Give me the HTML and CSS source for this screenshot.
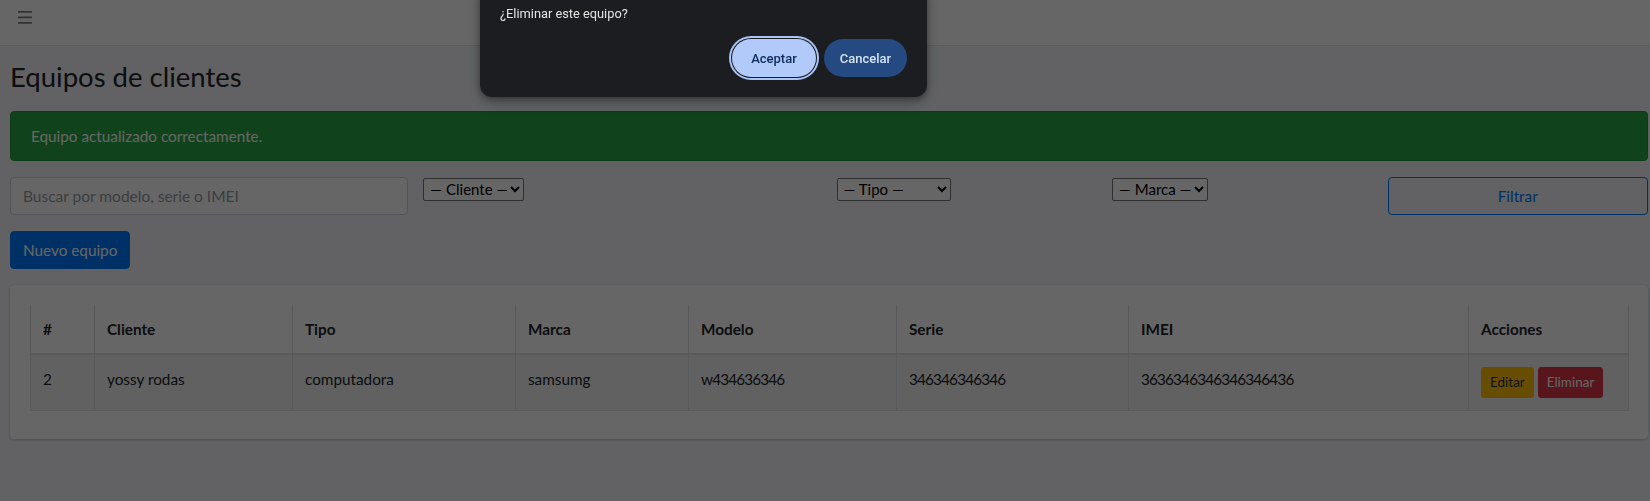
FILE: index.html
```html
<!DOCTYPE html>
<html lang="es">
<head>
<meta charset="utf-8">
<title>Equipos de clientes</title>
<link rel="stylesheet" href="styles.css">
</head>
<body>
<header class="topbar">
  <a class="menu-toggle" href="#" aria-label="Menú">
    <svg width="14" height="13" viewBox="0 0 14 13" aria-hidden="true">
      <rect x="0" y="0" width="14" height="1.7" rx="0.5"/>
      <rect x="0" y="5.6" width="14" height="1.7" rx="0.5"/>
      <rect x="0" y="11.1" width="14" height="1.7" rx="0.5"/>
    </svg>
  </a>
</header>

<main class="content">
  <h1 class="page-title">Equipos de clientes</h1>

  <div class="alert alert-success">Equipo actualizado correctamente.</div>

  <form class="filters">
    <div class="col col-3"><input class="form-control" type="text" placeholder="Buscar por modelo, serie o IMEI"></div>
    <div class="col col-3"><select class="plain-select sel-cliente"><option>— Cliente —</option></select></div>
    <div class="col col-2"><select class="plain-select sel-tipo"><option>— Tipo —</option></select></div>
    <div class="col col-2"><select class="plain-select sel-marca"><option>— Marca —</option></select></div>
    <div class="col col-2"><button type="button" class="btn btn-outline-primary btn-block">Filtrar</button></div>
  </form>

  <div class="toolbar">
    <button type="button" class="btn btn-primary">Nuevo equipo</button>
  </div>

  <section class="card">
    <table class="table">
      <colgroup>
        <col class="c-num"><col class="c-cliente"><col class="c-tipo"><col class="c-marca">
        <col class="c-modelo"><col class="c-serie"><col class="c-imei"><col class="c-acciones">
      </colgroup>
      <thead>
        <tr>
          <th>#</th><th>Cliente</th><th>Tipo</th><th>Marca</th><th>Modelo</th><th>Serie</th><th>IMEI</th><th>Acciones</th>
        </tr>
      </thead>
      <tbody>
        <tr>
          <td>2</td>
          <td>yossy rodas</td>
          <td>computadora</td>
          <td>samsumg</td>
          <td class="cell-code">w434636346</td>
          <td class="cell-code">346346346346</td>
          <td class="cell-code">3636346346346346436</td>
          <td><button type="button" class="btn btn-sm btn-warning">Editar</button> <button type="button" class="btn btn-sm btn-danger">Eliminar</button></td>
        </tr>
      </tbody>
    </table>
  </section>
</main>

<div class="overlay"></div>

<div class="dialog" role="alertdialog">
  <p class="dialog-msg">¿Eliminar este equipo?</p>
  <div class="dialog-actions">
    <button type="button" class="dlg-btn dlg-ok">Aceptar</button>
    <button type="button" class="dlg-btn dlg-cancel">Cancelar</button>
  </div>
</div>
</body>
</html>
```

FILE: styles.css
```css
html, body {
  margin: 0;
  overflow: hidden;
}

body {
  background: #f4f6f9;
  font-family: Lato, "Noto Sans", sans-serif;
  font-size: 15.3px;
  line-height: 24px;
  color: #212529;
  height: 501px;
}

/* top navbar */
.topbar {
  box-sizing: border-box;
  height: 46px;
  background: #fff;
  border-bottom: 1px solid #dee2e6;
  padding: 11px 0 0 18px;
}
.menu-toggle {
  display: block;
  width: 14px;
  height: 13px;
  fill: rgba(0, 0, 0, 0.5);
}
.menu-toggle svg { display: block; }

/* content */
.content {
  padding: 0 2px 0 10px;
}

.page-title {
  margin: 15px 0 18px;
  font-size: 27.5px;
  font-weight: 400;
  line-height: 32px;
  color: #212529;
}

.alert {
  box-sizing: border-box;
  height: 50px;
  padding: 12px 20px;
  margin-bottom: 16px;
  border: 1px solid transparent;
  border-radius: 4px;
}
.alert-success {
  background: #28a745;
  border-color: #23923d;
  color: #fff;
}

/* filter row */
.filters {
  display: flex;
  margin: 0 -7.5px 16px;
}
.col {
  box-sizing: border-box;
  padding: 0 7.5px;
}
.col-3 { flex: 0 0 25%; }
.col-2 { flex: 0 0 16.6667%; }

.form-control {
  display: block;
  box-sizing: border-box;
  width: 100%;
  height: 38px;
  padding: 6px 12px;
  font: inherit;
  font-size: 15.5px;
  line-height: 24px;
  color: #495057;
  background: #fff;
  border: 1px solid #ced4da;
  border-radius: 4px;
}
.form-control::placeholder { color: #939ba2; }

.plain-select {
  box-sizing: border-box;
  height: 23px;
  font-family: inherit;
  font-size: 15px;
  line-height: normal;
  color: #000;
  background: #fff;
  border: 1px solid #767676;
  border-radius: 2px;
  padding: 0 0 0 2px;
}
.sel-cliente { width: 101px; }
.sel-tipo { width: 114px; }
.sel-marca { width: 96px; }

/* buttons */
.btn {
  display: inline-block;
  box-sizing: border-box;
  font-family: inherit;
  font-size: 15.3px;
  line-height: 24px;
  padding: 6px 12px;
  border: 1px solid transparent;
  border-radius: 4px;
  text-align: center;
  cursor: pointer;
}
.btn-block { display: block; width: 100%; }
.btn-primary {
  background: #007bff;
  border-color: #007bff;
  color: #fff;
}
.btn-outline-primary {
  background: transparent;
  border-color: #007bff;
  color: #007bff;
}
.btn-sm {
  font-size: 13.5px;
  line-height: 21px;
  padding: 4px 8px;
  border-radius: 3px;
}
.btn-warning {
  background: #ffc107;
  border-color: #ffc107;
  color: #1f2d3d;
}
.btn-danger {
  background: #dc3545;
  border-color: #dc3545;
  color: #fff;
}

.toolbar { margin-bottom: 16px; }

/* card + table */
.card {
  background: #fff;
  border-radius: 4px;
  box-shadow: 0 0 1px rgba(0, 0, 0, 0.125), 0 1px 3px rgba(0, 0, 0, 0.2);
  padding: 20px 20px 28px;
}

.table {
  width: 100%;
  table-layout: fixed;
  border-collapse: collapse;
  color: #212529;
}
.c-num { width: 64px; }
.c-cliente { width: 198px; }
.c-tipo { width: 223px; }
.c-marca { width: 173px; }
.c-modelo { width: 208px; }
.c-serie { width: 232px; }
.c-imei { width: 340px; }
.c-acciones { width: 160px; }

.table th,
.table td {
  padding: 12px;
  text-align: left;
  border: 1px solid #dee2e6;
  white-space: nowrap;
}
.table thead th {
  border-top: 0;
  border-bottom: 2px solid #dee2e6;
  vertical-align: bottom;
  font-weight: 700;
}
.table td { vertical-align: top; }
.table .cell-code { letter-spacing: -0.85px; }
.table tbody tr:nth-child(odd) { background: rgba(0, 0, 0, 0.05); }

/* modal dimming */
.overlay {
  position: fixed;
  inset: 0;
  background: rgba(0, 0, 0, 0.6);
}

/* browser confirm dialog */
.dialog {
  position: fixed;
  top: -20px;
  left: 480px;
  width: 447px;
  box-sizing: border-box;
  padding: 24px 20px 20px;
  background: #1c1d21;
  border-radius: 12px;
  box-shadow: 0 2px 6px rgba(0, 0, 0, 0.35), 0 6px 16px rgba(0, 0, 0, 0.25);
  font-family: "Segoe UI", Roboto, "Noto Sans", sans-serif;
  color: #e3e3e3;
}
.dialog-msg {
  margin: 0;
  font-size: 12.8px;
  line-height: 20px;
}
.dialog-actions {
  display: flex;
  justify-content: flex-end;
  gap: 8px;
  margin-top: 15px;
}
.dlg-btn {
  box-sizing: border-box;
  height: 38px;
  border: 0;
  border-radius: 19px;
  font-family: inherit;
  font-size: 13px;
  font-weight: 500;
  padding: 0;
  text-align: center;
}
.dlg-ok {
  width: 84px;
  background: #b2caf9;
  color: #0b2a5e;
  box-shadow: 0 0 0 1px #1c1d21, 0 0 0 3px #a9c4f6;
}
.dlg-cancel {
  width: 83px;
  background: #244a81;
  color: #d6e2f8;
}
```
